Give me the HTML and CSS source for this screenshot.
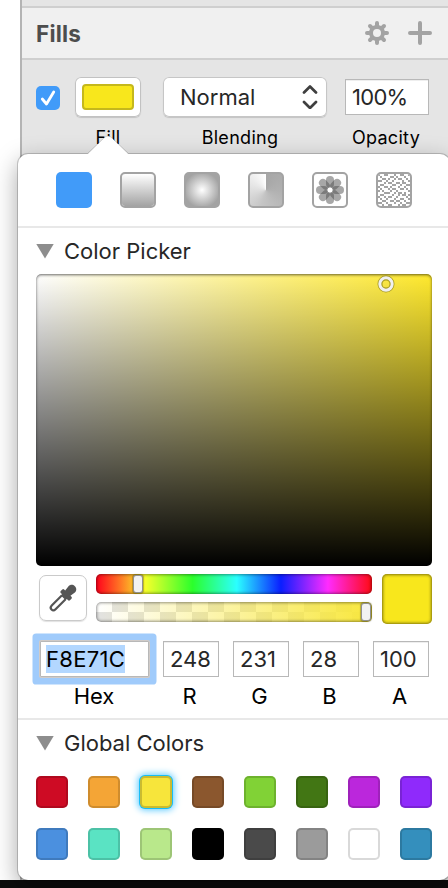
FILE: index.html
```html
<!DOCTYPE html>
<html lang="en">
<head>
<meta charset="utf-8">
<title>Fills</title>
<link rel="stylesheet" href="styles.css">
</head>
<body>
<div class="window">
  <section class="inspector">
    <header class="section-head">
      <h1>Fills</h1>
      <svg class="gear" width="24" height="24" viewBox="-12 -12 24 24" fill="none" stroke="#a3a3a3">
        <circle r="6" stroke-width="4"/>
        <path stroke-width="4" stroke-linecap="round" d="M0-7.5V-10M0 7.5V10M-7.5 0H-10M7.5 0H10M-5.3-5.3l-1.7-1.7M5.3-5.3l1.7-1.7M-5.3 5.3l-1.7 1.7M5.3 5.3l1.7 1.7"/>
      </svg>
      <svg width="24" height="24" viewBox="0 0 24 24" stroke="#a3a3a3" stroke-width="4" stroke-linecap="round"><path d="M12 2v20M2 12h20"/></svg>
    </header>
    <div class="fill-row">
      <div class="check"><svg width="24" height="24" viewBox="0 0 24 24" fill="none" stroke="#fff" stroke-width="2.8" stroke-linecap="round" stroke-linejoin="round"><path d="M6.300 13l4.200 5L17.700 6"/></svg></div>
      <div class="field fill"><div class="well"><i></i></div><label>Fill</label></div>
      <div class="field blending">
        <div class="select"><span>Normal</span><svg width="16" height="24" viewBox="0 0 16 24" fill="none" stroke="#3f3f3f" stroke-width="2.700" stroke-linecap="round" stroke-linejoin="round"><path d="M2 7.500L8 1.500l6 6M2 17l6 6 6-6"/></svg></div>
        <label>Blending</label>
      </div>
      <div class="field opacity"><div class="input">100%</div><label>Opacity</label></div>
    </div>
  </section>
  <div class="dock"></div>

  <section class="popover">
    <svg class="arrow" width="44" height="22" viewBox="0 0 44 22"><path fill="#fff" d="M0 22Q2 21 4 19L18 5Q22 1 26 5L40 19Q42 21 44 22Z"/><path fill="none" stroke="#000" stroke-opacity=".13" d="M2 20L18 5Q22 1 26 5L42 20"/></svg>
    <div class="types">
      <div class="type solid"></div>
      <div class="type linear"></div>
      <div class="type radial"></div>
      <div class="type angular"></div>
      <div class="type"><svg width="32" height="32" viewBox="-16 -16 32 32"><g id="petals"></g><circle r="2.500" fill="#fff"/></svg></div>
      <div class="type"><svg width="32" height="32" viewBox="0 0 16 16" shape-rendering="crispEdges"><path id="noise" fill="#a3a3a3"/></svg></div>
    </div>
    <div class="picker">
      <h2><i class="tri"></i>Color Picker</h2>
      <div class="spectrum"><svg class="knob" width="20" height="20" viewBox="0 0 20 20" fill="none"><circle cx="10" cy="10" r="6" stroke="#5b5300" stroke-opacity=".5" stroke-width="5"/><circle cx="10" cy="10" r="6.200" stroke="#f0f0f0" stroke-width="3"/></svg></div>
      <div class="controls">
        <div class="dropper"><svg width="28" height="28" viewBox="0 0 28 28"><g transform="translate(-.500 .500) rotate(45 14 14)"><path fill="#555" d="M14-3.500c3 0 4.500 2.200 4.500 4.500L17.700 6.500h1.500q1.300 0 1.300 1.300v2.200q0 1.300-1.300 1.300H17.500L16.500 13h-5l-1-1.700H8.800Q7.500 11.300 7.500 10V7.800q0-1.300 1.300-1.300h1.500L9.500 1C9.500-1.300 11-3.500 14-3.500z"/><path fill="none" stroke="#555" stroke-width="2.200" d="M11.300 12v14.500q0 3 2.700 3t2.700-3V12"/></g></svg></div>
        <div class="sliders">
          <div class="slider hue"><i></i></div>
          <div class="slider alpha"><i></i></div>
        </div>
        <div class="current"></div>
      </div>
      <div class="values">
        <div class="value hex"><div class="input"><mark>F8E71C</mark></div><label>Hex</label></div>
        <div class="value"><div class="input">248</div><label>R</label></div>
        <div class="value"><div class="input">231</div><label>G</label></div>
        <div class="value"><div class="input">28</div><label>B</label></div>
        <div class="value"><div class="input">100</div><label>A</label></div>
      </div>
    </div>
    <div class="globals">
      <h2><i class="tri"></i>Global Colors</h2>
      <div class="swatches">
        <i style="background:#ce0b24"></i><i style="background:#f4a536"></i><i class="selected" style="background:#f7e53b"></i><i style="background:#8b572e"></i><i style="background:#81d236"></i><i style="background:#427614"></i><i style="background:#bb27dc"></i><i style="background:#8f2afb"></i>
        <i style="background:#4b90df"></i><i style="background:#5ae3c3"></i><i style="background:#b9e88b"></i><i style="background:#000"></i><i style="background:#4a4a4a"></i><i style="background:#9b9b9b"></i><i style="background:#fff"></i><i style="background:#348fbd"></i>
      </div>
    </div>
  </section>
</div>
<script src="icons.js"></script>
</body>
</html>
```
FILE: styles.css
```css
* { box-sizing: border-box; }
body { margin: 0; font-family: Inter, Roboto, sans-serif; font-size: 22px; color: #272727; }
h1, h2 { margin: 0; }
i { display: block; }
label { color: #000; white-space: nowrap; }
.window { position: relative; width: 448px; height: 888px; overflow: hidden; background: #fff; }

.inspector { height: 880px; margin-left: 20px; padding-top: 6px; border-left: 2px solid #b4b4b4; background: #e5e5e5; }
.section-head { display: flex; align-items: center; height: 54px; padding: 0 16px 0 14px; border: solid #cfcfcf; border-width: 2px 0; background: #f0f0f0; }
h1 { flex: 1; padding-top: 2px; font-size: 22.5px; line-height: 50px; font-weight: 700; letter-spacing: .2px; color: #4d4d4d; }
.gear { margin-right: 19px; }
.fill-row { display: flex; padding: 17px 0 0 14px; }
.check { width: 24px; height: 24px; margin-top: 9px; border-radius: 5px; background: #419bf9; }
.field { display: flex; flex-direction: column; align-items: center; }
.field label { font-size: 18px; line-height: 24px; margin-top: 9px; letter-spacing: .3px; }
.fill { margin-left: 15px; }
.well { width: 66px; height: 40px; padding: 7px; border-radius: 6px; background: #fff; box-shadow: inset 0 0 0 1px #c2c2c2, 0 1px 1px rgba(0,0,0,.15); }
.well i { width: 52px; height: 26px; border: 2px solid #c5b81c; border-radius: 4px; background: #f8e71c; }
.blending { margin-left: 22px; }
.select { display: flex; justify-content: space-between; align-items: center; width: 164px; height: 40px; padding: 0 9px 0 17px; border-radius: 6px; background: #fff; box-shadow: inset 0 0 0 1px #c6c6c6, 0 1px 1px rgba(0,0,0,.15); }
.blending .select + label { margin-left: -10px; }
.opacity { margin-left: 18px; }
.input { height: 36px; padding-left: 6px; border: 1px solid #b8b8b8; line-height: 35px; background: #fff; box-shadow: inset 0 1px 0 #eee; }
.opacity .input { width: 84px; margin: 2px 0; letter-spacing: -.7px; }
.opacity label { margin-left: -2px; }
.dock { height: 8px; background: #0c0c0c; }

.popover { position: absolute; left: 18px; top: 154px; width: 432px; height: 726px; border-radius: 10px; background: #fff; box-shadow: 0 0 0 1px rgba(0,0,0,.18), 0 8px 24px rgba(0,0,0,.36); }
.arrow { position: absolute; left: 68px; top: -21px; }
.types { display: flex; gap: 28px; height: 74px; padding: 18px 0 0 38px; border-bottom: 2px solid #e8e8e8; }
.type { width: 36px; height: 36px; border: 2px solid #a3a3a3; border-radius: 5px; overflow: hidden; }
.type svg { display: block; }
.solid { border: 0; background: #419bf9; }
.linear { background: linear-gradient(#fff, #a3a3a3) padding-box; }
.radial { background: radial-gradient(circle, #fff, #a3a3a3 18px); }
.angular { background: conic-gradient(#a6a6a6, #b0b0b0 25%, #c5c5c5 55%, #fff); }
.picker { height: 492px; padding: 0 18px; border-bottom: 2px solid #e8e8e8; }
h2 { display: flex; align-items: center; gap: 10px; height: 46px; font-size: 22px; line-height: 46px; font-weight: 400; }
.tri { width: 18px; height: 15px; background: #8d8d8d; clip-path: polygon(0 0, 100% 0, 50% 100%); }
.spectrum { position: relative; width: 396px; height: 292px; border-radius: 5px; background: linear-gradient(transparent, #000), linear-gradient(90deg, #fff, #ffe92d); box-shadow: inset 0 1px 3px rgba(0,0,0,.6); }
.knob { position: absolute; left: 340px; top: 0; }
.controls { display: flex; margin: 8px 0 0 3px; }
.dropper { display: grid; place-items: center; width: 48px; height: 46px; margin-top: 1px; border: 1px solid #cacaca; border-radius: 7px; box-shadow: 0 1px 1px rgba(0,0,0,.12); }
.dropper svg { overflow: visible; }
.sliders { display: flex; flex-direction: column; gap: 8px; margin-left: 9px; }
.slider { display: flex; align-items: center; width: 276px; height: 20px; border-radius: 5px; box-shadow: inset 0 0 3px 1px rgba(0,0,0,.4); }
.slider i { width: 10px; height: 18px; border: 1px solid rgba(0,0,0,.4); border-radius: 3px; background: #f2f2f2; box-shadow: 0 0 1px 1px rgba(0,0,0,.25); }
.hue { background: linear-gradient(90deg, #ff001c, #ff7a24 9%, #f5ff2b 18%, #2bff2b 35%, #2bffff 51%, #0a1eff 67%, #ff2bff 84%, #ff0a12); }
.hue i { margin-left: 37px; }
.alpha { background: linear-gradient(90deg, rgba(248,231,60,0), #f8e73c), conic-gradient(#fff 25%, #e2e2e2 0 50%, #fff 0 75%, #e2e2e2 0) 16px 0 / 32px 20px; }
.alpha i { margin-left: 265px; }
.current { width: 50px; height: 50px; margin-left: 10px; border-radius: 5px; background: #f8e71c; box-shadow: inset 0 0 3px 1px rgba(80,70,0,.7); }
.values { display: flex; gap: 14px; margin: 17px 0 0 4px; }
.value { display: flex; flex-direction: column; width: 56px; text-align: center; }
.value .input { text-align: left; }
.value label { line-height: 24px; margin: 7px 3px 0 0; }
.value.hex { width: 109px; }
.hex .input { padding-left: 5px; border-radius: 1px; letter-spacing: .3px; box-shadow: 0 0 0 1px #d0cbc8, 0 0 0 7.5px #a0cbfb; }
.hex label { margin-right: 1px; }
mark { display: inline-block; height: 28px; line-height: 28px; color: #000; background: #b3d7ff; }
.globals { padding: 0 18px; }
.swatches { display: grid; grid-template-columns: repeat(8, 32px); gap: 20px; padding-top: 10px; }
.swatches i { height: 32px; border-radius: 5px; box-shadow: inset 0 0 0 2px rgba(0,0,0,.15); }
.swatches .selected { box-shadow: inset 0 0 0 2px rgba(0,0,0,.18), 0 0 0 1px #18bdf5, 0 0 7px 2px #59c9ff; }
```
FILE: icons.js
```js
const svgNS = "http://www.w3.org/2000/svg";
const petals = document.getElementById("petals");
for (let i = 0; i < 8; i++) {
  const p = document.createElementNS(svgNS, "rect");
  const attrs = { x: -4, y: -14, width: 8, height: 12, rx: 4, fill: "#505050", "fill-opacity": 0.5, transform: `rotate(${i * 45})` };
  for (const k in attrs) p.setAttribute(k, attrs[k]);
  petals.append(p);
}
const rows = [
  "1001100010011001", "0100001101000100", "0011010010110010", "1100100100001001",
  "0001011001101100", "0110000110010011", "1001101000100100", "0100010110011010",
  "1010001001000001", "0001110010110100", "0110000100101101", "1001011001000010",
  "0100100010011001", "0011001101100100", "1100100010010011", "0010011000101100"
];
document.getElementById("noise").setAttribute("d", rows.map((r, y) =>
  [...r].map((c, x) => c === "1" ? `M${x} ${y}h1v1h-1z` : "").join("")).join(""));
```
